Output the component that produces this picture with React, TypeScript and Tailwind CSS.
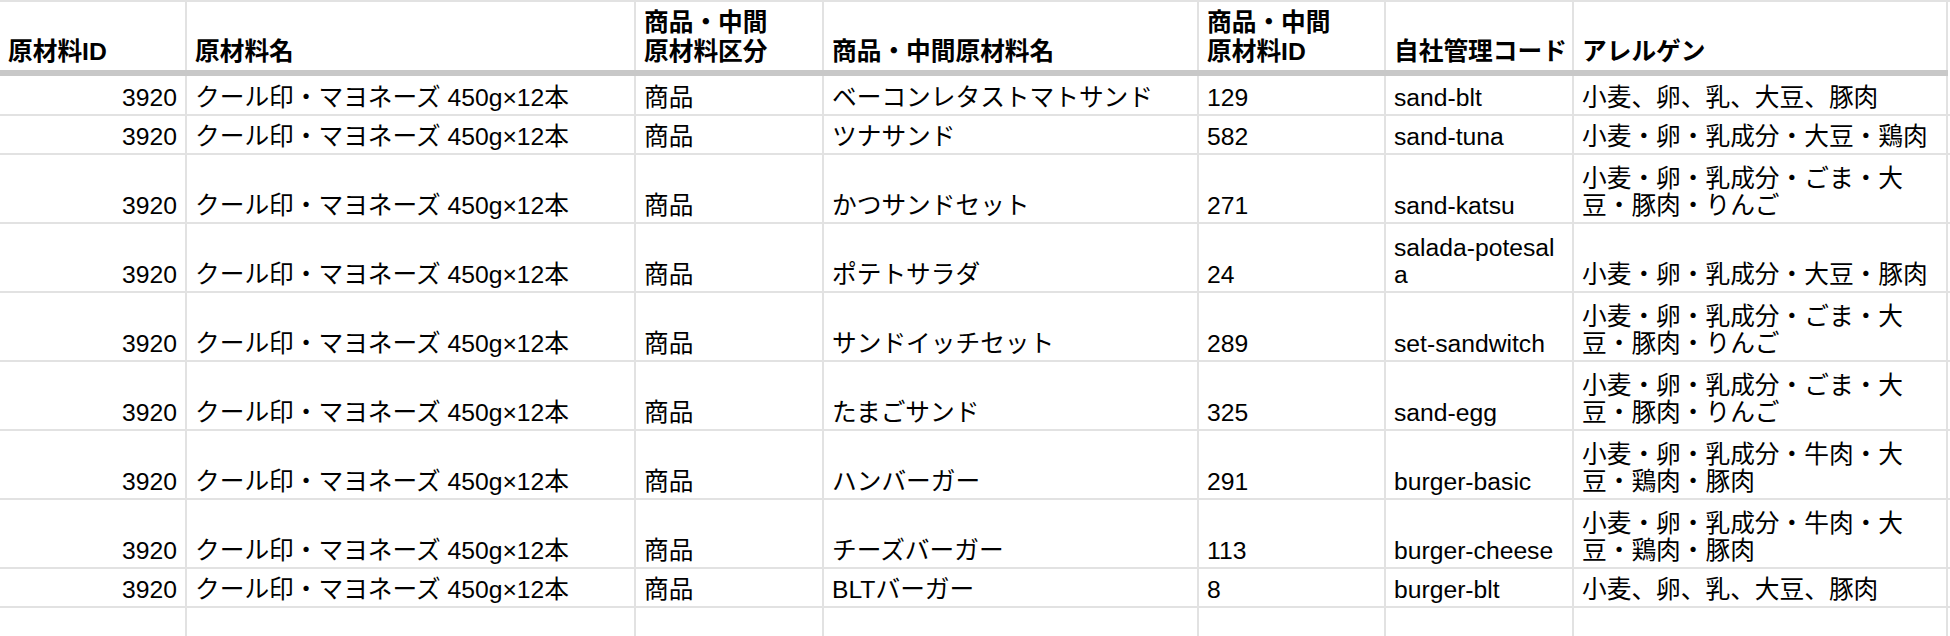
import React from 'react'

type Row = {
  id: string
  name: string
  kind: string
  product: string
  productId: string
  code: string[]
  allergen: string[]
  h: 'single' | 'double'
}

const COLS = 'grid grid-cols-[187px_449px_188px_375px_187px_188px_374px]'

const rows: Row[] = [
  { id: '3920', name: 'クール印・マヨネーズ 450g×12本', kind: '商品', product: 'ベーコンレタストマトサンド', productId: '129', code: ['sand-blt'], allergen: ['小麦、卵、乳、大豆、豚肉'], h: 'single' },
  { id: '3920', name: 'クール印・マヨネーズ 450g×12本', kind: '商品', product: 'ツナサンド', productId: '582', code: ['sand-tuna'], allergen: ['小麦・卵・乳成分・大豆・鶏肉'], h: 'single' },
  { id: '3920', name: 'クール印・マヨネーズ 450g×12本', kind: '商品', product: 'かつサンドセット', productId: '271', code: ['sand-katsu'], allergen: ['小麦・卵・乳成分・ごま・大', '豆・豚肉・りんご'], h: 'double' },
  { id: '3920', name: 'クール印・マヨネーズ 450g×12本', kind: '商品', product: 'ポテトサラダ', productId: '24', code: ['salada-potesal', 'a'], allergen: ['小麦・卵・乳成分・大豆・豚肉'], h: 'double' },
  { id: '3920', name: 'クール印・マヨネーズ 450g×12本', kind: '商品', product: 'サンドイッチセット', productId: '289', code: ['set-sandwitch'], allergen: ['小麦・卵・乳成分・ごま・大', '豆・豚肉・りんご'], h: 'double' },
  { id: '3920', name: 'クール印・マヨネーズ 450g×12本', kind: '商品', product: 'たまごサンド', productId: '325', code: ['sand-egg'], allergen: ['小麦・卵・乳成分・ごま・大', '豆・豚肉・りんご'], h: 'double' },
  { id: '3920', name: 'クール印・マヨネーズ 450g×12本', kind: '商品', product: 'ハンバーガー', productId: '291', code: ['burger-basic'], allergen: ['小麦・卵・乳成分・牛肉・大', '豆・鶏肉・豚肉'], h: 'double' },
  { id: '3920', name: 'クール印・マヨネーズ 450g×12本', kind: '商品', product: 'チーズバーガー', productId: '113', code: ['burger-cheese'], allergen: ['小麦・卵・乳成分・牛肉・大', '豆・鶏肉・豚肉'], h: 'double' },
  { id: '3920', name: 'クール印・マヨネーズ 450g×12本', kind: '商品', product: 'BLTバーガー', productId: '8', code: ['burger-blt'], allergen: ['小麦、卵、乳、大豆、豚肉'], h: 'single' },
]

const headers: string[][] = [
  ['原材料ID'],
  ['原材料名'],
  ['商品・中間', '原材料区分'],
  ['商品・中間原材料名'],
  ['商品・中間', '原材料ID'],
  ['自社管理コード'],
  ['アレルゲン'],
]

function Cell({ lines, right }: { lines: string[]; right?: boolean }) {
  return (
    <div
      className={`flex flex-col justify-end overflow-hidden whitespace-nowrap border-r-2 border-[#e2e2e2] px-[8px] pb-[3px] leading-[27px] ${
        right ? 'items-end' : 'items-start'
      }`}
    >
      {lines.map((l, i) => (
        <div key={i}>{l}</div>
      ))}
    </div>
  )
}

export default function App() {
  return (
    <div
      className="h-[636px] w-[1950px] overflow-hidden bg-white text-[24.7px] leading-[25px] text-black"
      style={{ fontFamily: '"Liberation Sans", Arial, "Noto Sans CJK JP", sans-serif' }}
    >
      {/* header row */}
      <div className={`${COLS} h-[70px] border-t-2 border-[#e2e2e2] font-bold`}>
        {headers.map((h, i) => (
          <div
            key={i}
            className="flex flex-col justify-end border-r-2 border-[#e2e2e2] px-[8px] pb-[6px] whitespace-nowrap"
          >
            {h.map((l, j) => (
              <div key={j} className={j === 0 && h.length > 1 ? 'mb-[4px]' : ''}>
                {l}
              </div>
            ))}
          </div>
        ))}
      </div>
      {/* frozen row divider */}
      <div className="h-[6px] w-[1948px] bg-[#c8c8c8]" />

      {rows.map((r, i) => (
        <div
          key={i}
          className={`${COLS} border-b-2 border-[#e2e2e2] ${
            r.h === 'double' ? 'h-[69px]' : i === 0 ? 'h-[40px]' : 'h-[39px]'
          }`}
        >
          <Cell lines={[r.id]} right />
          <Cell lines={[r.name]} />
          <Cell lines={[r.kind]} />
          <Cell lines={[r.product]} />
          <Cell lines={[r.productId]} />
          <Cell lines={r.code} />
          <Cell lines={r.allergen} />
        </div>
      ))}

      {/* empty row */}
      <div className={`${COLS} h-[39px] border-b-2 border-[#e2e2e2]`}>
        {headers.map((_, i) => (
          <div key={i} className="border-r-2 border-[#e2e2e2]" />
        ))}
      </div>
    </div>
  )
}
